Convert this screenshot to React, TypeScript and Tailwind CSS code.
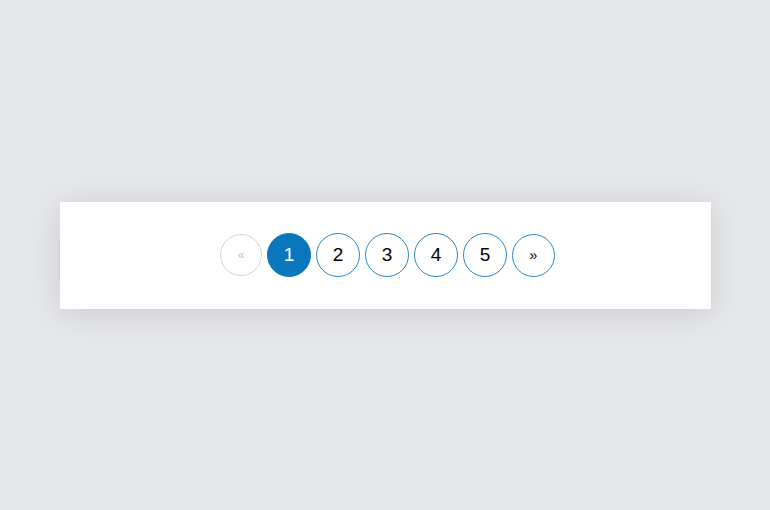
const pages = [1, 2, 3, 4, 5];

export default function App() {
  return (
    <div className="min-h-[510px] bg-[#e6e7ea] flex items-center justify-center font-['Liberation_Sans',Arial,sans-serif]">
      <div className="w-[651px] h-[107px] bg-white shadow-[0_4px_30px_rgba(0,0,0,0.12)] flex items-center justify-center pl-[5px]">
        <nav className="flex items-center gap-[5px]">
          <button
            disabled
            className="w-[42px] h-[42px] rounded-full border border-[#d4d4d4] text-[#bdbdbd] text-[12px] flex items-center justify-center"
          >
            «
          </button>
          {pages.map((p) => (
            <button
              key={p}
              className={
                p === 1
                  ? "w-[44px] h-[44px] rounded-full bg-[#0a77bd] border border-[#0a77bd] text-white text-[19px] flex items-center justify-center"
                  : "w-[44px] h-[44px] rounded-full border-[1.5px] border-[#2a86c8] text-black text-[19px] flex items-center justify-center"
              }
            >
              {p}
            </button>
          ))}
          <button className="w-[43px] h-[43px] rounded-full border-[1.5px] border-[#2a86c8] text-black text-[14px] flex items-center justify-center">
            »
          </button>
        </nav>
      </div>
    </div>
  );
}
